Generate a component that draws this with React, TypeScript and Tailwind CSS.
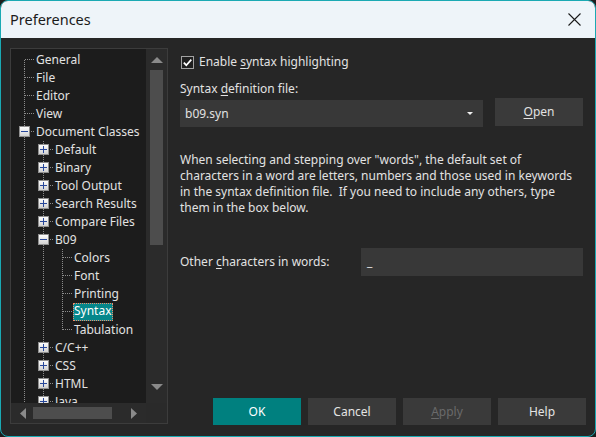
import React from "react";

type Row = {
  label: string;
  depth: number;
  exp?: "+" | "-";
  first?: boolean;
  last?: boolean;
  selected?: boolean;
};

const ROWS: Row[] = [
  { label: "General", depth: 0, first: true },
  { label: "File", depth: 0 },
  { label: "Editor", depth: 0 },
  { label: "View", depth: 0 },
  { label: "Document Classes", depth: 0, exp: "-" },
  { label: "Default", depth: 1, exp: "+" },
  { label: "Binary", depth: 1, exp: "+" },
  { label: "Tool Output", depth: 1, exp: "+" },
  { label: "Search Results", depth: 1, exp: "+" },
  { label: "Compare Files", depth: 1, exp: "+" },
  { label: "B09", depth: 1, exp: "-" },
  { label: "Colors", depth: 2 },
  { label: "Font", depth: 2 },
  { label: "Printing", depth: 2 },
  { label: "Syntax", depth: 2, selected: true },
  { label: "Tabulation", depth: 2, last: true },
  { label: "C/C++", depth: 1, exp: "+" },
  { label: "CSS", depth: 1, exp: "+" },
  { label: "HTML", depth: 1, exp: "+" },
  { label: "Java", depth: 1, exp: "+" },
];

const LINE = "#8c8c8c";

// one 19x18 cell of tree guide lines (and the expander box if any)
const GuideCell = ({ own, row }: { own: boolean; row: Row }) => {
  let y1 = 0;
  let y2 = 18;
  if (own && row.first) y1 = 9;
  if (own && row.last) y2 = 9;
  return (
    <svg width="19" height="18" className="shrink-0" shapeRendering="crispEdges">
      <defs>
        <linearGradient id="expbg" x1="0" y1="0" x2="0" y2="1">
          <stop offset="0" stopColor="#ffffff" />
          <stop offset="1" stopColor="#cfcfcf" />
        </linearGradient>
      </defs>
      <line x1="9.5" y1={y1} x2="9.5" y2={y2} stroke={LINE} strokeDasharray="1 1" />
      {own && <line x1="10" y1="8.5" x2="19" y2="8.5" stroke={LINE} strokeDasharray="1 1" />}
      {own && row.exp && (
        <g>
          <rect x="4.5" y="3.5" width="10" height="10" fill="url(#expbg)" stroke="#8f8f8f" />
          <line x1="6" y1="8.5" x2="13" y2="8.5" stroke="#27479a" />
          {row.exp === "+" && <line x1="9.5" y1="5" x2="9.5" y2="12" stroke="#27479a" />}
        </g>
      )}
    </svg>
  );
};

const TreeRow = ({ row }: { row: Row }) => {
  const cells = [];
  for (let i = 0; i <= row.depth; i++) {
    cells.push(<GuideCell key={i} own={i === row.depth} row={row} />);
  }
  return (
    <div className="flex h-[18px] items-center whitespace-nowrap">
      {cells}
      <span
        className={
          row.selected
            ? "ml-[1px] px-[1px] h-[18px] leading-[16px] bg-[#06878b] text-white outline outline-1 outline-dotted outline-[#f08a6a] -outline-offset-1"
            : "ml-[1px] px-[1px] h-[18px] leading-[17px] text-[#e2e2e2]"
        }
      >
        {row.label}
      </span>
    </div>
  );
};

const Btn = ({
  children,
  primary,
  disabled,
}: {
  children: React.ReactNode;
  primary?: boolean;
  disabled?: boolean;
}) => (
  <div
    className={`w-[88px] h-[27px] flex items-center justify-center text-[12px] ${
      primary ? "bg-[#00807f] text-white" : "bg-[#3a3a3a]"
    } ${disabled ? "text-[#6a6a6a]" : primary ? "" : "text-[#e4e4e4]"}`}
  >
    {children}
  </div>
);

export default function App() {
  return (
    <div className="w-[596px] h-[437px] bg-[#1d1d1d]" style={{ fontFamily: '"Noto Sans", "Open Sans", sans-serif' }}>
      <div className="w-full h-full flex flex-col rounded-[8px] border border-[#1aa9b3] overflow-hidden bg-[#262626]">
        {/* title bar */}
        <div className="h-[37px] shrink-0 bg-[#eef4f9] flex items-center justify-between pl-[9px] pr-[14px]">
          <span className="text-[14.5px] text-[#1b1b1b]">Preferences</span>
          <svg width="13" height="13" viewBox="0 0 13 13">
            <path d="M0.5 0.5 L12.5 12.5 M12.5 0.5 L0.5 12.5" stroke="#1b1b1b" strokeWidth="1.1" fill="none" />
          </svg>
        </div>

        {/* body */}
        <div className="flex-1 flex pt-[10px] pl-[9px] pr-[9px] pb-[11px] text-[12px]">
          {/* tree */}
          <div className="w-[158px] h-[376px] shrink-0 border border-[#3c3c3c] grid grid-cols-[135px_21px] grid-rows-[354px_20px]">
            <div className="bg-[#1c1c1c] overflow-hidden pl-[4px] pt-[2px]">
              {ROWS.map((r) => (
                <TreeRow key={r.label} row={r} />
              ))}
            </div>
            {/* vertical scrollbar */}
            <div className="bg-[#2b2b2b] flex flex-col items-center">
              <div className="h-[21px] flex items-center justify-center">
                <svg width="12" height="6" viewBox="0 0 12 6">
                  <path d="M0 6 L6 0 L12 6 Z" fill="#8a8a8a" />
                </svg>
              </div>
              <div className="w-[13px] h-[175px] bg-[#4d4d4d]" />
              <div className="flex-1" />
              <div className="h-[19px] flex items-start justify-center pt-[0px]">
                <svg width="12" height="6" viewBox="0 0 12 6">
                  <path d="M0 0 L12 0 L6 6 Z" fill="#8a8a8a" />
                </svg>
              </div>
            </div>
            {/* horizontal scrollbar */}
            <div className="bg-[#2b2b2b] flex items-center pl-[9px]">
              <svg width="6" height="11" viewBox="0 0 6 11">
                <path d="M6 0 L0 5.5 L6 11 Z" fill="#8a8a8a" />
              </svg>
              <div className="ml-[7px] w-[79px] h-[12px] bg-[#4d4d4d]" />
              <div className="ml-[19px]">
                <svg width="6" height="11" viewBox="0 0 6 11">
                  <path d="M0 0 L6 5.5 L0 11 Z" fill="#8a8a8a" />
                </svg>
              </div>
            </div>
            <div className="bg-[#2a2a2a]" />
          </div>

          {/* right panel */}
          <div className="ml-[12px] flex-1 flex flex-col text-[#e2e2e2]">
            <div className="pr-[3px] flex flex-col">
              <div className="mt-[6px] h-[16px] flex items-center">
                <div className="ml-[1px] w-[13px] h-[13px] border border-[#a2a2a2] bg-[#1f1f1f] flex items-center justify-center">
                  <svg width="11" height="11" viewBox="0 0 11 11">
                    <path d="M1.8 5.6 L4.3 8.2 L9.3 2.6" stroke="#ffffff" strokeWidth="1.7" fill="none" />
                  </svg>
                </div>
                <span className="ml-[5px]">
                  Enable <span className="underline underline-offset-2">s</span>yntax highlighting
                </span>
              </div>

              <div className="mt-[11px] h-[16px] flex items-center">
                <span>
                  Syntax <span className="underline underline-offset-2">d</span>efinition file:
                </span>
              </div>

              <div className="mt-[1px] flex items-start">
                <div className="mt-[2px] w-[303px] h-[27px] bg-[#383838] flex items-center justify-between pl-[5px] pr-[10px]">
                  <span>b09.syn</span>
                  <svg width="6" height="3" viewBox="0 0 6 3">
                    <path d="M0 0 L6 0 L3 3 Z" fill="#f0f0f0" />
                  </svg>
                </div>
                <div className="ml-[12px] w-[88px] h-[28px] bg-[#3a3a3a] flex items-center justify-center">
                  <span>
                    <span className="underline underline-offset-2">O</span>pen
                  </span>
                </div>
              </div>

              <p className="mt-[25px] leading-[16px] whitespace-nowrap">
                When selecting and stepping over "words", the default set of
                <br />
                characters in a word are letters, numbers and those used in keywords
                <br />
                in the syntax definition file.&nbsp; If you need to include any others, type
                <br />
                them in the box below.
              </p>

              <div className="mt-[32px] flex items-center">
                <span className="w-[181px]">
                  Other <span className="underline underline-offset-2">c</span>haracters in words:
                </span>
                <div className="w-[222px] h-[28px] bg-[#383838] flex items-center pl-[6px]">
                  <span>_</span>
                </div>
              </div>
            </div>

            <div className="mt-auto flex justify-end gap-[7px]">
              <Btn primary>OK</Btn>
              <Btn>Cancel</Btn>
              <Btn disabled>
                <span>
                  <span className="underline underline-offset-2">A</span>pply
                </span>
              </Btn>
              <Btn>Help</Btn>
            </div>
          </div>
        </div>
      </div>
    </div>
  );
}
